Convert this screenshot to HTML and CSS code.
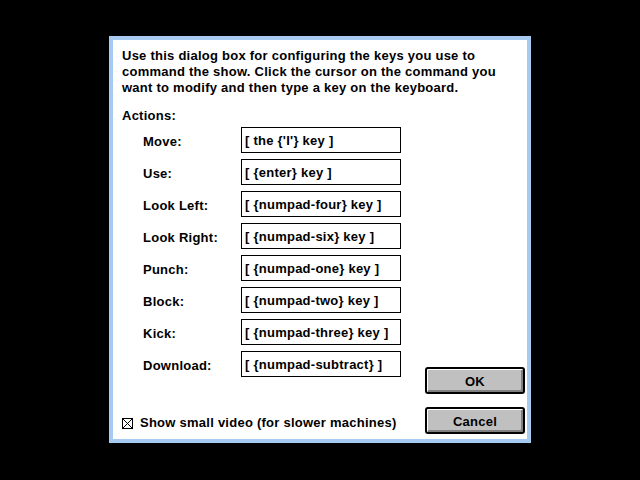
FILE: index.html
```html
<!DOCTYPE html>
<html lang="en">
<head>
  <meta charset="UTF-8" />
  <title>Keyboard Setup</title>
  <link rel="stylesheet" href="styles.css">
</head>
<body>
  <div class="dialog">
    <p class="intro">Use this dialog box for configuring the keys you use to<br>command the show. Click the cursor on the command you<br>want to modify and then type a key on the keyboard.</p>

    <div class="main">
      <div class="left">
        <div class="heading">Actions:</div>
        <div class="rows">
          <div class="row"><span class="label">Move:</span><div class="keybox">[ the {'I'} key ]</div></div>
          <div class="row"><span class="label">Use:</span><div class="keybox">[ {enter} key ]</div></div>
          <div class="row"><span class="label">Look Left:</span><div class="keybox">[ {numpad-four} key ]</div></div>
          <div class="row"><span class="label">Look Right:</span><div class="keybox">[ {numpad-six} key ]</div></div>
          <div class="row"><span class="label">Punch:</span><div class="keybox">[ {numpad-one} key ]</div></div>
          <div class="row"><span class="label">Block:</span><div class="keybox">[ {numpad-two} key ]</div></div>
          <div class="row"><span class="label">Kick:</span><div class="keybox">[ {numpad-three} key ]</div></div>
          <div class="row"><span class="label">Download:</span><div class="keybox">[ {numpad-subtract} ]</div></div>
        </div>
        <label class="option">
          <svg class="check" width="11" height="11" viewBox="0 0 11 11">
            <rect x="0.5" y="0.5" width="10" height="10" fill="#fff" stroke="#000"/>
            <path d="M1 1 L10 10 M10 1 L1 10" stroke="#000" stroke-width="1"/>
          </svg>
          Show small video (for slower machines)
        </label>
      </div>

      <div class="buttons">
        <button class="btn">OK</button>
        <button class="btn">Cancel</button>
      </div>
    </div>
  </div>
</body>
</html>
```

FILE: styles.css
```css
html, body {
  margin: 0;
  padding: 0;
  height: 100%;
}
body {
  background: #000;
  display: flex;
  align-items: center;
  justify-content: center;
  font-family: "Liberation Sans", Arial, sans-serif;
  font-weight: bold;
  font-size: 13px;
  letter-spacing: 0.25px;
  line-height: 16px;
  color: #000;
}
.dialog {
  box-sizing: border-box;
  width: 422px;
  height: 407px;
  margin-top: -1px;
  background: #fff;
  border: 4px solid #a6caf0;
  padding: 8px 2px 5px 9px;
  display: flex;
  flex-direction: column;
}
.intro {
  margin: 0;
  white-space: nowrap;
}
.main {
  flex: 1;
  display: flex;
  justify-content: space-between;
  margin-top: 12px;
}
.left {
  display: flex;
  flex-direction: column;
}
.rows {
  display: flex;
  flex-direction: column;
  gap: 6px;
  margin-top: 3px;
  padding-left: 21px;
}
.row {
  display: flex;
  height: 26px;
}
.label {
  width: 98px;
  padding-top: 7px;
}
.keybox {
  box-sizing: border-box;
  width: 160px;
  height: 26px;
  border: 1px solid #000;
  padding: 5px 3px 0;
  white-space: nowrap;
  overflow: hidden;
}
.option {
  display: flex;
  align-items: center;
  gap: 7px;
  margin-top: 38px;
}
.check {
  display: block;
}
.buttons {
  align-self: flex-end;
  display: flex;
  flex-direction: column;
  gap: 13px;
}
.btn {
  box-sizing: border-box;
  width: 100px;
  height: 27px;
  font: inherit;
  letter-spacing: inherit;
  color: #000;
  background: #c0c0c0;
  border: 2px solid #000;
  border-radius: 3px;
  box-shadow: inset 1px 1px #fff, inset -2px -2px #808080;
  padding: 2px 0 0;
}
```
